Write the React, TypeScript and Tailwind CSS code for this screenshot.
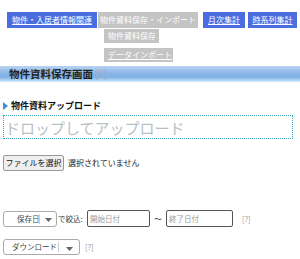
import React from "react";

const navBlue = "bg-[#4a6ee0] text-white underline h-[16px] flex items-center justify-center shrink-0";

function Caret() {
  return (
    <svg width="7" height="4" viewBox="0 0 7 4" className="mt-[3px]">
      <path d="M0 0 L7 0 L3.5 4 Z" fill="#666" />
    </svg>
  );
}

export default function App() {
  return (
    <div
      className="w-[300px] h-[259px] overflow-hidden bg-white relative whitespace-nowrap"
      style={{ fontFamily: '"Noto Sans CJK JP", "Liberation Sans", sans-serif' }}
    >
      {/* top nav */}
      <div className="flex items-start pl-[7px] pt-[12px] gap-[1px] text-[8px] leading-none">
        <div className={navBlue + " w-[90px]"}>物件・入居者情報関連</div>
        <div className="flex flex-col w-[100px] shrink-0">
          <div className="bg-[#c4c4c4] text-white h-[16px] flex items-center justify-center">物件資料保存・インポート</div>
          <div className="bg-[#c4c4c4] text-white h-[14px] pl-[4px] ml-[6px] mt-[1px] w-[55px] flex items-center">物件資料保存</div>
          <div className="bg-[#c4c4c4] text-white underline h-[14px] pl-[4px] ml-[6px] mt-[5px] w-[69px] flex items-center">データインポート</div>
        </div>
        <div className={navBlue + " ml-[4px] w-[42px]"}>月次集計</div>
        <div className={navBlue + " ml-[2px] w-[49px]"}>時系列集計</div>
        <div className={navBlue + " ml-[2px] w-[10px]"}></div>
      </div>

      {/* header bar */}
      <div className="mt-[4px] h-[16px] bg-[linear-gradient(to_bottom,#b9d3f2_0%,#8ab6e8_45%,#7fb0e6_70%,#d0ecfa_100%)] flex items-center pl-[9px] text-[10.5px] font-bold text-[#222] leading-none">
        物件資料保存画面
        <span className="ml-[2px] text-[#aab] font-normal">[?]</span>
      </div>

      {/* upload section */}
      <div className="px-[3px]">
        <div className="mt-[19px] flex items-center text-[9px] font-bold text-[#111] leading-none">
          <svg width="5" height="8" viewBox="0 0 5 8" className="mr-[3px]">
            <path d="M0 0 L5 4 L0 8 Z" fill="#3c8fd8" />
          </svg>
          物件資料アップロード
        </div>
        <div className="mt-[5px] h-[24px] w-[290px] border border-dotted border-[#3aa3b8] flex items-center text-[15px] text-[#b8c0c4] leading-none pl-[1px]">
          ドロップしてアップロード
        </div>

        <div className="mt-[16px] flex items-center text-[8px] leading-none">
          <div className="h-[16px] w-[61px] border border-[#999] rounded-[2px] bg-[#efefef] flex items-center justify-center text-[#111]">
            ファイルを選択
          </div>
          <span className="ml-[4px] text-[#222]">選択されていません</span>
        </div>

        {/* filter row */}
        <div className="mt-[39px] flex items-center text-[7.5px] leading-none text-[#555]">
          <div className="h-[16px] w-[54px] border border-[#aaa] rounded-[3px] flex items-center shrink-0">
            <span className="pl-[13px] w-[35px] shrink-0 text-[#444]">保存日</span>
            <span className="h-[10px] border-l border-[#ccc]"></span>
            <span className="flex-1 flex justify-center"><Caret /></span>
          </div>
          <span className="ml-[1px] text-[#333] w-[29px] shrink-0">で絞込:</span>
          <div className="h-[17px] w-[63px] border border-[#555] rounded-[2px] flex items-center pl-[2px] text-[#999] shrink-0">開始日付</div>
          <span className="mx-[4px] text-[#333] text-[8px]">～</span>
          <div className="h-[17px] w-[67px] border border-[#555] rounded-[2px] flex items-center pl-[2px] text-[#999] shrink-0">終了日付</div>
          <span className="ml-[9px] text-[#999]">[?]</span>
        </div>

        <div className="mt-[12px] flex items-center text-[7.5px] leading-none text-[#555]">
          <div className="h-[16px] w-[77px] border border-[#aaa] rounded-[3px] flex items-center shrink-0">
            <span className="pl-[8px] w-[54px] shrink-0 text-[#444]">ダウンロード</span>
            <span className="h-[10px] border-l border-[#ccc]"></span>
            <span className="flex-1 flex justify-center"><Caret /></span>
          </div>
          <span className="ml-[5px] text-[#999]">[?]</span>
        </div>
      </div>
    </div>
  );
}
